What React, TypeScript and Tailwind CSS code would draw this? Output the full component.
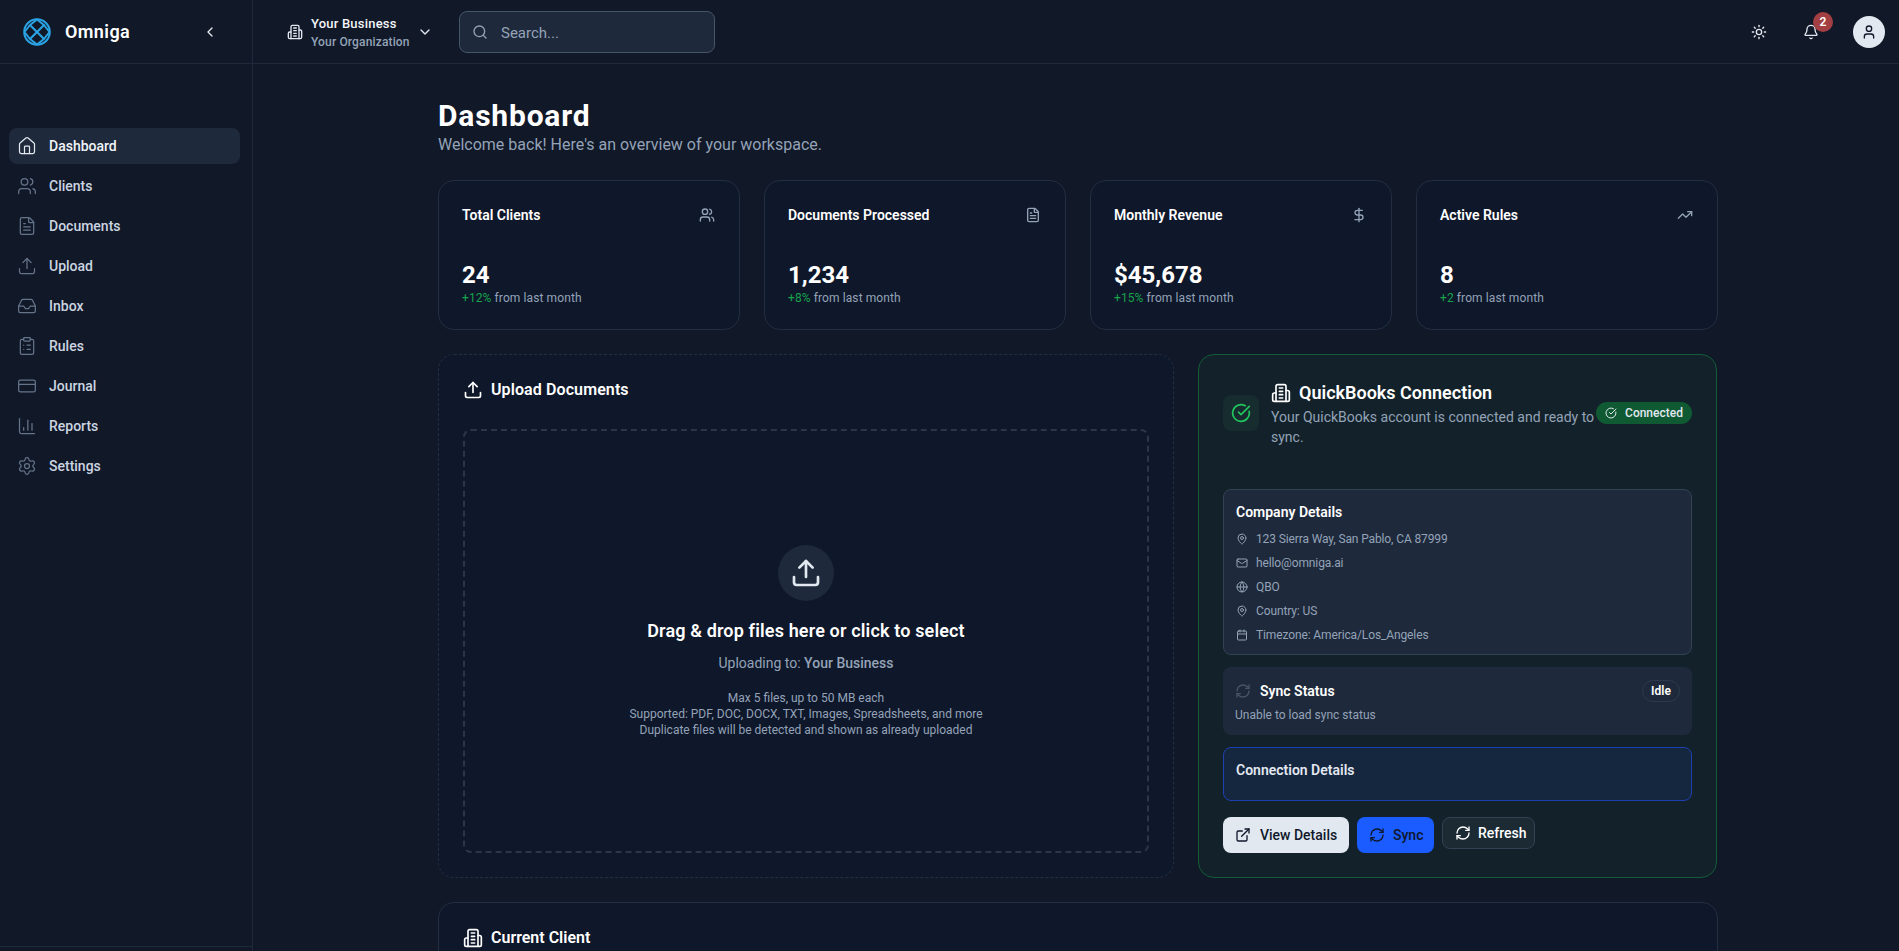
import {
  BarChart3, Bell, Calendar, ChevronDown, ChevronLeft, CircleCheckBig, ClipboardList,
  CreditCard, DollarSign, ExternalLink, FileText, Globe, Home, Inbox, Mail, MapPin, RefreshCw, Search, Settings,
  Sun, TrendingUp, Upload, User, Users,
} from "lucide-react";

const navItems = [
  { label: "Dashboard", icon: Home, active: true },
  { label: "Clients", icon: Users },
  { label: "Documents", icon: FileText },
  { label: "Upload", icon: Upload },
  { label: "Inbox", icon: Inbox },
  { label: "Rules", icon: ClipboardList },
  { label: "Journal", icon: CreditCard },
  { label: "Reports", icon: BarChart3 },
  { label: "Settings", icon: Settings },
];

const stats = [
  { title: "Total Clients", value: "24", delta: "+12%", icon: Users },
  { title: "Documents Processed", value: "1,234", delta: "+8%", icon: FileText },
  { title: "Monthly Revenue", value: "$45,678", delta: "+15%", icon: DollarSign },
  { title: "Active Rules", value: "8", delta: "+2", icon: TrendingUp },
];

const companyRows = [
  { text: "123 Sierra Way, San Pablo, CA 87999", icon: MapPin },
  { text: "hello@omniga.ai", icon: Mail },
  { text: "QBO", icon: Globe },
  { text: "Country: US", icon: MapPin },
  { text: "Timezone: America/Los_Angeles", icon: Calendar },
];

function Logo() {
  return (
    <svg width="28" height="28" viewBox="0 0 28 28" fill="none" stroke="#2aa3e4" strokeWidth="2">
      <circle cx="14" cy="14" r="12.8" />
      <path d="M14 1.5 L21 7 L14 14 L7 7 Z" />
      <path d="M14 14 L21 21 L14 26.5 L7 21 Z" />
      <path d="M1.5 14 L7 7 M1.5 14 L7 21 M26.5 14 L21 7 M26.5 14 L21 21" />
    </svg>
  );
}

// older lucide Building2, the installed one has a door instead of a fourth line
function Building({ size, className }: { size: number; className?: string }) {
  return (
    <svg width={size} height={size} viewBox="0 0 24 24" fill="none" stroke="currentColor" strokeWidth="2" strokeLinecap="round" strokeLinejoin="round" className={className}>
      <path d="M6 22V4a2 2 0 0 1 2-2h8a2 2 0 0 1 2 2v18Z" />
      <path d="M6 12H4a2 2 0 0 0-2 2v6a2 2 0 0 0 2 2h2" />
      <path d="M18 9h2a2 2 0 0 1 2 2v9a2 2 0 0 1-2 2h-2" />
      <path d="M10 6h4" />
      <path d="M10 10h4" />
      <path d="M10 14h4" />
      <path d="M10 18h4" />
    </svg>
  );
}

export default function App() {
  return (
    <div className="flex h-screen overflow-hidden bg-[#111827] text-white font-['Roboto',sans-serif]">
      {/* Sidebar */}
      <aside className="flex w-[253px] shrink-0 flex-col border-r border-[#1e293b] bg-[#111827]">
        <div className="flex h-16 shrink-0 items-center border-b border-[#1e293b] pl-[23px] pr-[34px]">
          <Logo />
          <span className="ml-[14px] text-lg font-semibold tracking-[0.4px]">Omniga</span>
          <ChevronLeft className="ml-auto size-4 text-[#e2e8f0]" />
        </div>
        <nav className="flex flex-1 flex-col gap-1 pl-[9px] pt-16">
          {navItems.map((item) => (
            <div
              key={item.label}
              className={`flex h-9 w-[231px] items-center gap-3 rounded-lg px-2 text-sm font-medium ${
                item.active ? "bg-[#1e293b] text-[#f1f5f9]" : "text-[#cbd5e1]"
              }`}
            >
              <item.icon size={20} strokeWidth={1.5} className={item.active ? "text-[#e2e8f0]" : "text-[#64748b]"} />
              {item.label}
            </div>
          ))}
        </nav>
        <div className="h-[5px] shrink-0 border-t border-[#1e293b]" />
      </aside>

      <div className="flex min-w-0 flex-1 flex-col">
        {/* Top bar */}
        <header className="flex h-16 shrink-0 items-center border-b border-[#1e293b] pl-[34px] pr-[14px]">
          <Building size={16} className="text-[#e2e8f0]" />
          <div className="ml-2 flex w-[106px] flex-col whitespace-nowrap pt-[3px]">
            <span className="text-[13px] font-medium leading-[18px] tracking-[0.2px] text-[#f1f5f9]">Your Business</span>
            <span className="text-xs font-medium leading-[18px] tracking-[0.15px] text-[#94a3b8]">Your Organization</span>
          </div>
          <ChevronDown size={16} className="text-[#e2e8f0]" />
          <div className="ml-[26px] flex h-[42px] w-64 items-center gap-[13px] rounded-lg border border-[#475569] bg-[#1e293b] px-3">
            <Search size={16} className="text-[#94a3b8]" />
            <span className="pt-[3px] text-[15px] text-[#94a3b8]">Search...</span>
          </div>
          <Sun size={16} className="ml-auto text-[#e2e8f0]" />
          <div className="relative ml-9">
            <Bell size={16} className="text-[#e2e8f0]" />
            <span className="absolute -top-[12px] left-[10px] flex size-5 items-center justify-center rounded-full bg-[#a33f42] text-xs font-semibold text-white">
              2
            </span>
          </div>
          <div className="ml-[34px] flex size-8 items-center justify-center rounded-full bg-[#e2e8f0]">
            <User size={16} className="text-[#0f172a]" />
          </div>
        </header>

        <main className="min-h-0 flex-1 overflow-hidden pt-[33px]">
          <div className="ml-[185px] w-[1280px]">
            <h1 className="h-9 text-3xl font-bold leading-[38px] tracking-[0.8px]">Dashboard</h1>
            <p className="text-base leading-6 text-[#94a3b8]">Welcome back! Here's an overview of your workspace.</p>

            <div className="mt-[23px] grid grid-cols-4 gap-6">
              {stats.map((s) => (
                <div key={s.title} className="h-[150px] rounded-2xl border border-[#222e41] bg-[#0f172a] py-6 pl-[23px] pr-6">
                  <div className="flex h-5 items-center justify-between">
                    <span className="text-sm font-semibold">{s.title}</span>
                    <s.icon size={16} className="text-[#94a3b8]" />
                  </div>
                  <div className="mt-[34px] text-2xl font-bold leading-8">{s.value}</div>
                  <div className="-mt-px text-xs leading-4 tracking-[0.1px] text-[#94a3b8]">
                    <span className="text-[#16a34a]">{s.delta}</span> from last month
                  </div>
                </div>
              ))}
            </div>

            <div className="mt-6 grid grid-cols-[736px_519px] gap-6">
              {/* Upload */}
              <section className="h-[524px] rounded-2xl border border-dashed border-[#222e41] bg-[#0f172a] p-6">
                <div className="flex h-[22px] items-center gap-2 text-base font-semibold tracking-[0.1px]">
                  <Upload size={20} />
                  Upload Documents
                </div>
                <div className="mt-[28px] flex h-[424px] flex-col items-center justify-center rounded-lg border-2 border-dashed border-[#2b3648] text-center">
                  <div className="flex size-14 items-center justify-center rounded-full bg-[#1e293b]">
                    <Upload size={32} className="text-[#e2e8f0]" />
                  </div>
                  <div className="mt-4 text-lg font-semibold leading-7 tracking-[0.15px]">Drag &amp; drop files here or click to select</div>
                  <div className="mt-2 text-sm leading-5 text-[#94a3b8]">
                    Uploading to: <span className="font-medium">Your Business</span>
                  </div>
                  <div className="mt-[17px] text-xs leading-4 text-[#94a3b8]">
                    <p>Max 5 files, up to 50 MB each</p>
                    <p>Supported: PDF, DOC, DOCX, TXT, Images, Spreadsheets, and more</p>
                    <p>Duplicate files will be detected and shown as already uploaded</p>
                  </div>
                </div>
              </section>

              {/* QuickBooks */}
              <section className="h-[524px] rounded-2xl border border-[#125c36] bg-[#13222a] p-6">
                <div className="flex h-[68px] items-center">
                  <div className="flex size-9 shrink-0 items-center justify-center rounded-lg bg-[#162c2e]">
                    <CircleCheckBig size={20} className="text-[#22c55e]" />
                  </div>
                  <div className="ml-3 w-[324px] shrink-0">
                    <div className="flex h-7 items-center gap-2 text-lg font-semibold">
                      <Building size={20} />
                      QuickBooks Connection
                    </div>
                    <p className="text-sm leading-5 text-[#94a3b8]">Your QuickBooks account is connected and ready to sync.</p>
                  </div>
                  <div className="ml-auto flex h-[22px] w-24 items-center justify-center gap-2 rounded-full bg-[#0f5a33] text-xs font-medium text-[#e2e8f0]">
                    <CircleCheckBig size={12} />
                    Connected
                  </div>
                </div>

                <div className="mt-[42px] rounded-lg border border-[#334155] bg-[#1e293b] px-3 pb-[11px] pt-3">
                  <div className="mb-[9px] text-sm font-semibold leading-5">Company Details</div>
                  <div className="flex flex-col gap-2">
                    {companyRows.map((row) => (
                      <div key={row.text} className="flex h-4 items-center gap-2 text-xs tracking-[-0.12px] text-[#94a3b8]">
                        <row.icon size={12} />
                        {row.text}
                      </div>
                    ))}
                  </div>
                </div>

                <div className="mt-3 h-[68px] rounded-lg bg-[#1e293b] px-3 pt-[13px]">
                  <div className="flex h-[22px] items-center">
                    <RefreshCw size={16} className="text-[#475569]" />
                    <span className="ml-[9px] text-sm font-semibold">Sync Status</span>
                    <span className="ml-auto flex h-[22px] w-[38px] items-center justify-center rounded-full border border-[#2b3a4e] text-xs font-semibold">
                      Idle
                    </span>
                  </div>
                  <div className="mt-[5px] text-xs leading-4 text-[#94a3b8]">Unable to load sync status</div>
                </div>

                <div className="mt-3 h-[54px] rounded-lg border border-[#1e40af] bg-[#15263f] px-3 pt-3">
                  <div className="text-sm font-semibold leading-5 text-[#e2e8f0]">Connection Details</div>
                </div>

                <div className="mt-4 flex items-start gap-2">
                  <button className="flex h-9 w-[126px] items-center gap-[9px] whitespace-nowrap rounded-lg bg-[#e2e8f0] px-3 text-sm font-medium text-[#0f172a]">
                    <ExternalLink size={16} className="shrink-0" />
                    View Details
                  </button>
                  <button className="flex h-9 w-[77px] items-center gap-2 rounded-lg bg-[#1a5cff] px-3 text-sm font-medium text-[#0f172a]">
                    <RefreshCw size={16} className="shrink-0" />
                    Sync
                  </button>
                  <button className="flex h-8 w-[93px] items-center gap-[7px] rounded-lg border border-[#334155] bg-[#1b2a33] px-3 text-sm font-medium text-white">
                    <RefreshCw size={16} className="shrink-0" />
                    Refresh
                  </button>
                </div>
              </section>
            </div>

            <section className="mt-6 h-40 rounded-2xl border border-[#222e41] bg-[#0f172a] p-6">
              <div className="flex h-[22px] items-center gap-2 text-base font-semibold">
                <Building size={20} />
                Current Client
              </div>
            </section>
          </div>
        </main>
      </div>
    </div>
  );
}
